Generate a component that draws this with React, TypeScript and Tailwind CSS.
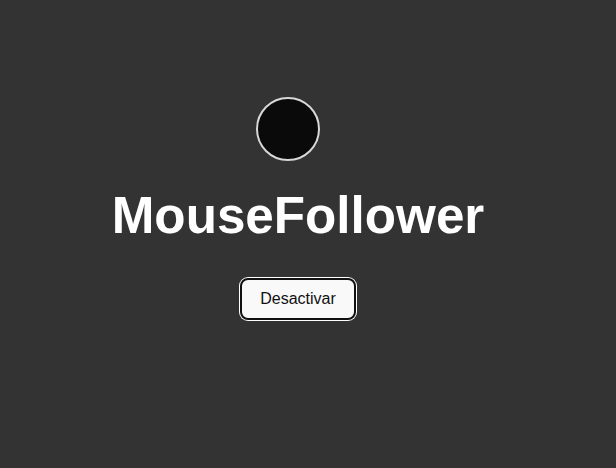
import React from "react";

const App = () => {
  return (
    <div className="relative w-[616px] h-[468px] bg-[#333333] overflow-hidden font-['Liberation_Sans',Arial,sans-serif]">
      {/* follower dot */}
      <div className="absolute left-[256px] top-[97px] w-16 h-16 rounded-full bg-[#0a0a0a] border-2 border-[#d8d8d8]" />

      <main className="w-[596px] flex flex-col items-center pt-[188px]">
        <h1 className="text-[51.2px] leading-[1.1] font-bold text-white">MouseFollower</h1>
        <button className="mt-[34px] w-[116px] h-[42px] flex items-center justify-center rounded-lg bg-[#f9f9f9] border-2 border-[#111] ring-1 ring-white text-[16px] text-[#111]">
          Desactivar
        </button>
      </main>
    </div>
  );
};

export default App;
